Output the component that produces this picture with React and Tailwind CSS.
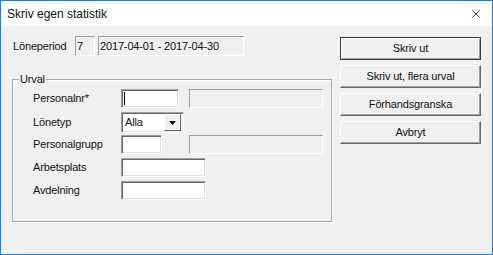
import { X } from 'lucide-react'

const FONT = { fontFamily: '"Liberation Sans", Arial, sans-serif' }

const BUTTONS = [
  { label: 'Skriv ut', primary: true },
  { label: 'Skriv ut, flera urval' },
  { label: 'Förhandsgranska' },
  { label: 'Avbryt' },
]

const sunken = 'border border-t-[#a0a0a0] border-l-[#a0a0a0] border-b-white border-r-white bg-white shadow-[inset_1px_1px_0_#696969,inset_-1px_-1px_0_#e3e3e3]'
const disabled = 'border border-t-[#a0a0a0] border-l-[#a0a0a0] border-b-white border-r-white bg-[#f0f0f0]'

function Field({ label, children, tall }) {
  return (
    <div className="flex items-start h-[23px]">
      <span className={`w-[88px] ${tall ? 'leading-[21px]' : 'leading-[19px]'}`}>{label}</span>
      {children}
    </div>
  )
}

export default function App() {
  return (
    <div style={FONT} className="w-[493px] h-[255px] border border-[#1883d7] bg-[#f0f0f0] flex flex-col text-[11px] tracking-[-0.15px] text-[#111] overflow-hidden">
      <div className="h-[25px] bg-white flex items-center justify-between pl-[6px] pr-[9px]">
        <span className="text-[12px] tracking-normal">Skriv egen statistik</span>
        <X size={14} strokeWidth={1.2} className="text-black" />
      </div>

      <div className="flex-1 flex pl-[11px] pt-[10px]">
        <div className="w-[320px] flex flex-col">
          <div className="flex items-center h-[20px]">
            <span className="w-[63px] pl-[1px]">Löneperiod</span>
            <div className={`w-[20px] h-[20px] ${disabled} flex items-center pl-[1px]`}>7</div>
            <div className={`ml-[3px] w-[146px] h-[20px] ${disabled} flex items-center pl-[1px]`}>2017-04-01 - 2017-04-30</div>
          </div>

          <div className="relative mt-[23px] h-[143px] border border-[#a8a8a8] shadow-[1px_1px_0_#fff,inset_1px_1px_0_#fff] pl-[20px] pt-[9px]">
            <span className="absolute -top-[8px] left-[6px] px-[1px] bg-[#f0f0f0] leading-[14px]">Urval</span>

            <Field label="Personalnr*">
              <div className={`w-[58px] h-[19px] ${sunken} flex items-center pl-[2px]`}>
                <span className="w-[1px] h-[13px] bg-black" />
              </div>
              <div className={`ml-[10px] w-[134px] h-[19px] ${disabled}`} />
            </Field>

            <Field label="Lönetyp" tall>
              <div className={`w-[63px] h-[21px] ${sunken} flex items-center pl-[3px] pr-[2px]`}>
                <span className="flex-1">Alla</span>
                <span className="w-[17px] h-[17px] bg-[#f0f0f0] border border-t-white border-l-white border-b-[#696969] border-r-[#696969] flex items-center justify-center">
                  <svg width="7" height="4" viewBox="0 0 7 4"><path d="M0 0h7L3.5 4z" fill="#000" /></svg>
                </span>
              </div>
            </Field>

            <Field label="Personalgrupp">
              <div className={`w-[41px] h-[19px] ${sunken}`} />
              <div className={`ml-[27px] w-[134px] h-[19px] ${disabled}`} />
            </Field>

            <Field label="Arbetsplats">
              <div className={`w-[85px] h-[19px] ${sunken}`} />
            </Field>

            <Field label="Avdelning">
              <div className={`w-[85px] h-[19px] ${sunken}`} />
            </Field>
          </div>
        </div>

        <div className="ml-[8px] mt-[1px] w-[141px] flex flex-col gap-[5px]">
          {BUTTONS.map(b => (
            <button
              key={b.label}
              className={`h-[23px] bg-[#f0f0f0] flex items-center justify-center ${b.primary
                ? 'border border-[#3c3c3c] shadow-[inset_1px_1px_0_#fff,inset_-1px_-1px_0_#a0a0a0]'
                : 'border border-t-white border-l-white border-b-[#696969] border-r-[#696969] shadow-[inset_-1px_-1px_0_#a0a0a0]'}`}
            >
              {b.label}
            </button>
          ))}
        </div>
      </div>
    </div>
  )
}
